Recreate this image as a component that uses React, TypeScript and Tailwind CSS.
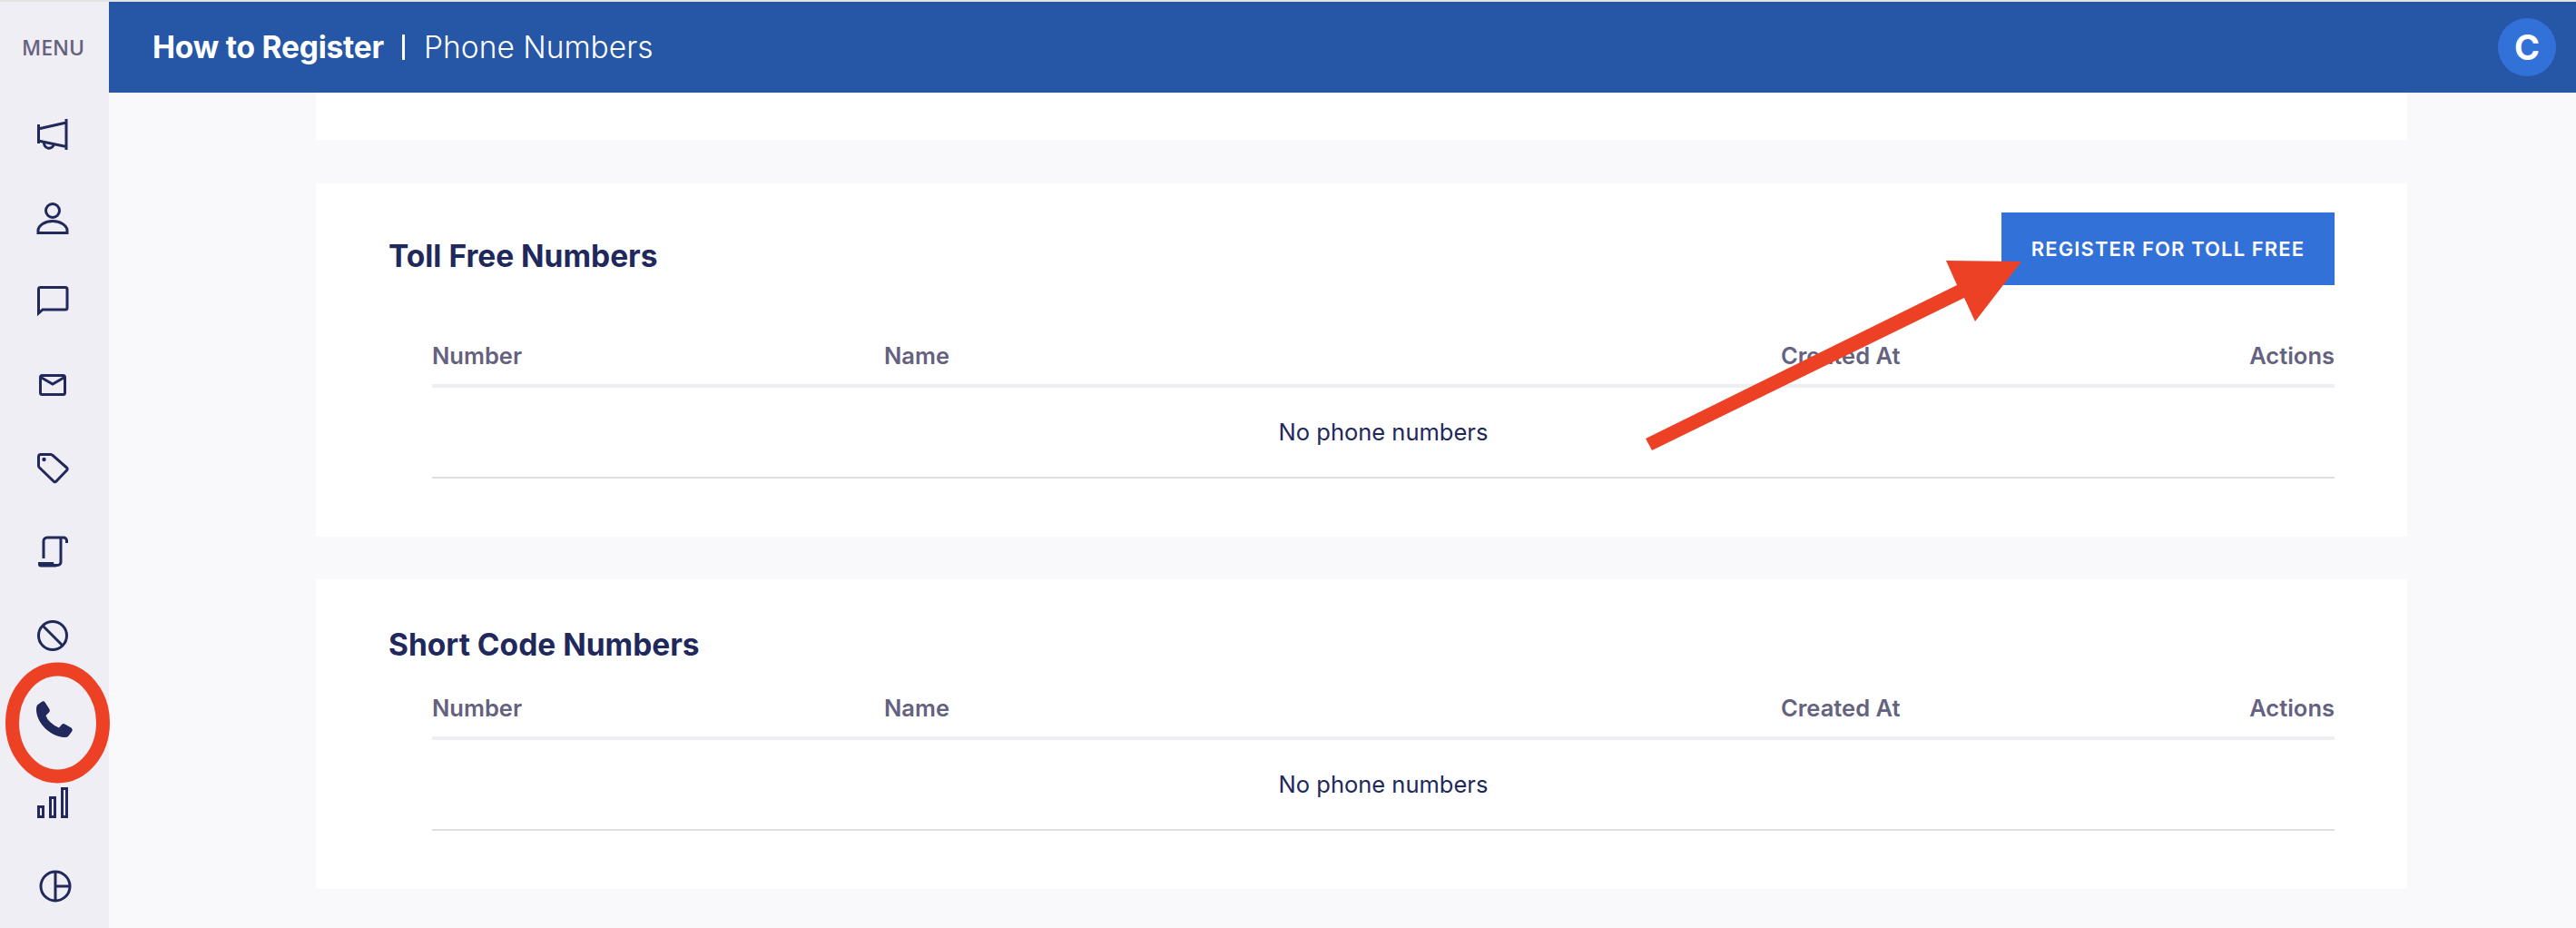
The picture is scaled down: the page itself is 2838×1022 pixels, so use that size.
import type { ReactNode } from "react";

const font = { fontFamily: '"Inter", "Liberation Sans", sans-serif' };

function NavIcon({ children }: { children: ReactNode }) {
  return (
    <div className="flex h-[92px] items-center justify-center">
      <svg width="48" height="48" viewBox="0 0 48 48" fill="none" stroke="#20285c" strokeWidth="3" className="overflow-visible">
        {children}
      </svg>
    </div>
  );
}

function Sidebar() {
  return (
    <aside className="w-[120px] shrink-0 bg-[#f0eef5]">
      <div className="flex h-[100px] items-center justify-center pr-[3px] font-['Open_Sans'] text-[23px] font-semibold text-[#65627f]">MENU</div>
      {/* campaigns */}
      <NavIcon>
        <g transform="translate(-2 0)">
          <path d="M39 7V41M8.500 13V34M8 18L39 11M8 31L39 37.500" />
          <path d="M15 31.500a5.500 5.500 0 1 0 10.500 2.500" />
        </g>
      </NavIcon>
      {/* contacts */}
      <NavIcon>
        <g transform="translate(-2 0)">
          <circle cx="24" cy="16" r="7.500" />
          <path d="M8 40.500H40V38C40 32 32 27.500 24 27.500S8 32 8 38Z" />
        </g>
      </NavIcon>
      {/* messages */}
      <NavIcon>
        <g transform="translate(-2 0)">
          <path d="M8.500 37V10.500a2 2 0 0 1 2-2H38a2 2 0 0 1 2 2V31a2 2 0 0 1-2 2H13Z" />
        </g>
      </NavIcon>
      {/* mail */}
      <NavIcon>
        <g transform="translate(-2 0)">
          <rect x="10.500" y="13.500" width="27" height="21" rx="2" />
          <path d="M11 15.500L24 23L37 15.500" />
        </g>
      </NavIcon>
      {/* tags */}
      <NavIcon>
        <g transform="translate(-2 0)">
          <path d="M8.500 11a2.500 2.500 0 0 1 2.500-2.500H22a3 3 0 0 1 2 1L39.500 23a2 2 0 0 1 0 3L28 38a2 2 0 0 1-3 0L9.500 23a3 3 0 0 1-1-2Z" />
          <circle cx="14.500" cy="14" r="2.200" fill="#20285c" stroke="none" />
        </g>
      </NavIcon>
      {/* scripts */}
      <NavIcon>
        <g transform="translate(-2 0)">
          <path d="M14 31V12a4 4 0 0 1 4-4H36a3.500 3.500 0 0 1 3.500 3.500V14" />
          <path d="M33 9V35a3.500 3.500 0 0 1-3.500 3.500H12" />
          <path d="M8 35H25a3 3 0 0 0 3 3v2.500H11a3 3 0 0 1-3-3Z" fill="#20285c" stroke="none" />
        </g>
      </NavIcon>
      {/* blocked */}
      <NavIcon>
        <g transform="translate(-2 0)">
          <circle cx="24" cy="24" r="15.500" />
          <path d="M13 13L35 35" />
        </g>
      </NavIcon>
      {/* phone numbers */}
      <NavIcon>
        <path
          d="M5 8.500L10.500 4.600Q12.500 3.600 13.600 5.500L18.500 13Q19.500 15 18 16.500L14.500 20Q17 28 29 33.500L32 30Q33.500 28.500 35.500 29.500L42.500 33.500Q44.500 35 43.500 37L39.500 42.500Q38 44.500 34 44C18 42 4.500 28 4 14Q4 10 5 8.500Z"
          fill="#20285c"
          stroke="none"
        />
      </NavIcon>
      {/* stats */}
      <NavIcon>
        <g transform="translate(-2 0)">
          <rect x="8.500" y="28.500" width="5" height="11" />
          <rect x="21.500" y="18.500" width="5" height="21" />
          <rect x="34.500" y="8.500" width="5" height="31" />
        </g>
      </NavIcon>
      {/* reports */}
      <NavIcon>
        <circle cx="25" cy="24" r="16" />
        <path d="M25 8V40M25 24H41" />
      </NavIcon>
    </aside>
  );
}

function PhoneTable() {
  return (
    <div>
      <div className="grid h-[66px] grid-cols-[498px_988px_1fr] items-center border-b-4 border-[#f0eef5] text-[25.500px] font-semibold text-[#65627f]">
        <div>Number</div>
        <div>Name</div>
        <div className="flex justify-between">
          <span>Created At</span>
          <span>Actions</span>
        </div>
      </div>
      <div className="flex h-[100px] items-center justify-center border-b-2 border-[#dfdfe1] pt-[1px] text-[25.500px] text-[#20285c]">
        No phone numbers
      </div>
    </div>
  );
}

export default function App() {
  return (
    <div className="relative h-[1022px] w-[2838px] overflow-hidden bg-[#f9f9fc]" style={font}>
      <div className="h-[2px] bg-[#e3e3e3]" />
      <div className="flex h-[1020px]">
        <Sidebar />
        <div className="min-w-0 flex-1">
          <header className="flex h-[100px] items-center justify-between bg-[#2657a6] pl-[48px] pr-[22px] text-white">
            <div className="flex items-center text-[33.500px]">
              <span className="font-bold tracking-[-0.2px]">How to Register</span>
              <span className="ml-[20px] mr-[21px] h-[28px] w-[3px] bg-white" />
              <span className="font-light">Phone Numbers</span>
            </div>
            <div className="flex h-[64px] w-[64px] items-center justify-center rounded-full bg-[#3271d8] text-[38px] font-bold">C</div>
          </header>
          <main className="pl-[228px] pr-[186px]">
            <div className="h-[52px] bg-white" />
            <section className="mt-[48px] h-[389px] bg-white px-[80px]">
              <div className="flex h-[159px] items-start justify-between">
                <h2 className="mt-[60px] text-[33.500px] font-bold leading-[40px] text-[#20285c]">Toll Free Numbers</h2>
                <button className="mt-[32px] h-[80px] w-[367px] bg-[#3271d8] text-[22px] font-semibold tracking-[1.100px] text-white">REGISTER FOR TOLL FREE</button>
              </div>
              <div className="ml-[48px]">
                <PhoneTable />
              </div>
            </section>
            <section className="mt-[47px] h-[341px] bg-white px-[80px]">
              <div className="h-[111px]">
                <h2 className="pt-[52px] text-[33.500px] font-bold leading-[40px] text-[#20285c]">Short Code Numbers</h2>
              </div>
              <div className="ml-[48px]">
                <PhoneTable />
              </div>
            </section>
          </main>
        </div>
      </div>
      {/* red annotations drawn over the screenshot */}
      <svg className="pointer-events-none absolute left-0 top-0" width="2838" height="1022" viewBox="0 0 2838 1022" fill="none">
        <ellipse cx="63.500" cy="796" rx="50" ry="59" stroke="#ec4125" strokeWidth="15" />
        <polygon points="1813,483 2156,314 2144,287 2227,288 2176,354 2164,328 1820,496" fill="#ec4125" />
      </svg>
    </div>
  );
}
